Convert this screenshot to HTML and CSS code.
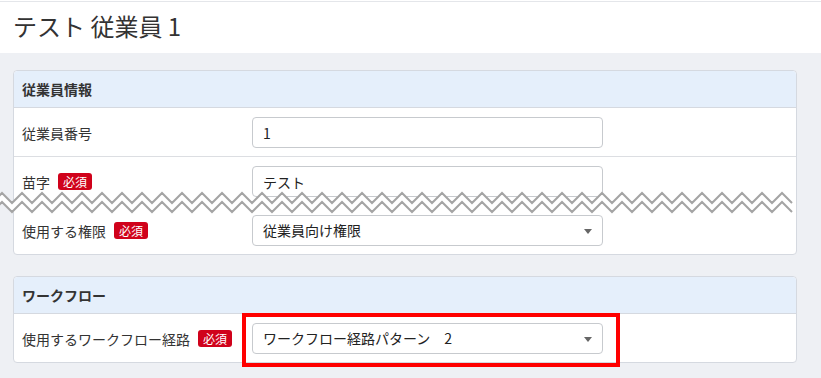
FILE: index.html
```html
<!DOCTYPE html>
<html lang="ja">
<head>
  <meta charset="UTF-8" />
  <meta name="viewport" content="width=device-width, initial-scale=1.0" />
  <title>テスト 従業員 1</title>
  <link rel="stylesheet" href="styles.css">
</head>
<body>

<div class="topbar"></div>

<!-- Page title -->
<header class="page-head">
  <h1>テスト 従業員 1</h1>
</header>

<main class="content">

  <!-- Employee info -->
  <section class="card">
    <h2 class="card-head">従業員情報</h2>
    <div class="row">
      <div class="label">従業員番号</div>
      <div class="field"><input class="input" type="text" value="1" /></div>
    </div>
    <div class="row row-cut">
      <div class="label">苗字 <span class="badge">必須</span></div>
      <div class="field"><input class="input" type="text" value="テスト" /></div>
    </div>
    <div class="row">
      <div class="label">使用する権限 <span class="badge">必須</span></div>
      <div class="field">
        <div class="select">従業員向け権限</div>
      </div>
    </div>
  </section>

  <!-- Workflow -->
  <section class="card workflow">
    <h2 class="card-head">ワークフロー</h2>
    <div class="row">
      <div class="label">使用するワークフロー経路 <span class="badge">必須</span></div>
      <div class="field">
        <div class="select">ワークフロー経路パターン　2</div>
        <span class="highlight"></span>
      </div>
    </div>
  </section>

</main>

<!-- torn edge marking the cut in the screenshot -->
<svg class="tear" width="821" height="26" viewBox="0 0 821 26">
  <path class="tear-fill" d="M-8,17.5 l10-10 10 10 10-10 10 10 10-10 10 10 10-10 10 10 10-10 10 10 10-10 10 10 10-10 10 10 10-10 10 10 10-10 10 10 10-10 10 10 10-10 10 10 10-10 10 10 10-10 10 10 10-10 10 10 10-10 10 10 10-10 10 10 10-10 10 10 10-10 10 10 10-10 10 10 10-10 10 10 10-10 10 10 10-10 10 10 10-10 10 10 10-10 10 10 10-10 10 10 10-10 10 10 10-10 10 10 10-10 10 10 10-10 10 10 10-10 10 10 10-10 10 10 10-10 10 10 10-10 10 10 10-10 10 10 10-10 10 10 10-10 10 10 10-10 10 10 10-10 10 10 10-10 10 10 10-10 10 10" />
  <path class="tear-line" d="M-8,13 l10-10 10 10 10-10 10 10 10-10 10 10 10-10 10 10 10-10 10 10 10-10 10 10 10-10 10 10 10-10 10 10 10-10 10 10 10-10 10 10 10-10 10 10 10-10 10 10 10-10 10 10 10-10 10 10 10-10 10 10 10-10 10 10 10-10 10 10 10-10 10 10 10-10 10 10 10-10 10 10 10-10 10 10 10-10 10 10 10-10 10 10 10-10 10 10 10-10 10 10 10-10 10 10 10-10 10 10 10-10 10 10 10-10 10 10 10-10 10 10 10-10 10 10 10-10 10 10 10-10 10 10 10-10 10 10 10-10 10 10 10-10 10 10 10-10 10 10 10-10 10 10 10-10 10 10 10-10 10 10" />
  <path class="tear-line" d="M-8,22 l10-10 10 10 10-10 10 10 10-10 10 10 10-10 10 10 10-10 10 10 10-10 10 10 10-10 10 10 10-10 10 10 10-10 10 10 10-10 10 10 10-10 10 10 10-10 10 10 10-10 10 10 10-10 10 10 10-10 10 10 10-10 10 10 10-10 10 10 10-10 10 10 10-10 10 10 10-10 10 10 10-10 10 10 10-10 10 10 10-10 10 10 10-10 10 10 10-10 10 10 10-10 10 10 10-10 10 10 10-10 10 10 10-10 10 10 10-10 10 10 10-10 10 10 10-10 10 10 10-10 10 10 10-10 10 10 10-10 10 10 10-10 10 10 10-10 10 10 10-10 10 10 10-10 10 10 10-10 10 10" />
</svg>

</body>
</html>
```

FILE: styles.css
```css
body {
  margin: 0;
  font-family: "Noto Sans CJK JP", "Noto Sans", sans-serif;
  color: #333;
  background: #eef0f4;
  position: relative;
}

.topbar {
  height: 1px;
  background: #fff;
  border-bottom: 1px solid #e4e6ea;
}

.page-head {
  background: #fff;
  height: 51px;
  padding: 0 13px;
  display: flex;
  align-items: center;
}

.page-head h1 {
  margin: 0 0 3px;
  font-size: 24px;
  font-weight: normal;
  line-height: 30px;
  color: #333;
}

.content {
  padding: 17px 24px 20px 13px;
}

.card {
  background: #fff;
  border: 1px solid #d5d9e0;
  border-radius: 4px;
}

.card.workflow {
  margin-top: 21px;
}

.card-head {
  margin: 0;
  height: 36px;
  line-height: 36px;
  padding: 0 8px;
  font-size: 14px;
  font-weight: bold;
  color: #333;
  background: #e5effb;
  border-bottom: 1px solid #d5d9e0;
  border-radius: 4px 4px 0 0;
}

.row {
  display: flex;
  align-items: center;
  padding: 9px 8px 8px;
  border-bottom: 1px solid #dcdee2;
}

.row:last-child {
  border-bottom: none;
}

/* the separator of this row is hidden under the torn edge */
.row.row-cut {
  border-bottom-color: transparent;
}

.label {
  width: 230px;
  font-size: 14px;
  color: #333;
  display: flex;
  align-items: center;
  gap: 8px;
}

.badge {
  display: inline-block;
  background: #d0021b;
  color: #fff;
  font-size: 12px;
  line-height: 17px;
  padding: 0 5px;
  border-radius: 3px;
}

.field {
  position: relative;
}

.input,
.select {
  box-sizing: border-box;
  width: 351px;
  height: 31px;
  margin: 0;
  padding: 0 10px;
  border: 1px solid #c7cace;
  border-radius: 4px;
  font-family: inherit;
  font-size: 14px;
  color: #222;
  background: #fff;
}

.select {
  position: relative;
  line-height: 29px;
}

.select::after {
  content: "";
  position: absolute;
  right: 10px;
  top: 13px;
  border-left: 4px solid transparent;
  border-right: 4px solid transparent;
  border-top: 5px solid #666;
}

/* red annotation frame around the workflow select */
.highlight {
  position: absolute;
  left: -10px;
  top: -10px;
  right: -17px;
  bottom: -13px;
  border: 4px solid #ff0000;
}

.tear {
  position: absolute;
  left: 0;
  top: 190px;
}

.tear-fill {
  fill: none;
  stroke: #fff;
  stroke-width: 8;
}

.tear-line {
  fill: none;
  stroke: #a4a4a4;
  stroke-width: 2;
}
```
